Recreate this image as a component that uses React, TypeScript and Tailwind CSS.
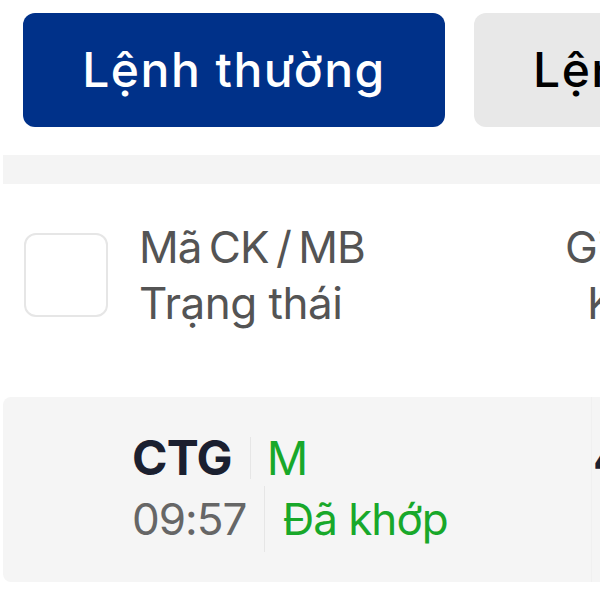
export default function App() {
  return (
    <div
      className="w-[600px] h-[600px] overflow-hidden bg-white"
      style={{ fontFamily: "Inter, 'Noto Sans', sans-serif" }}
    >
      {/* Order type tabs */}
      <div className="flex gap-[29px] pl-[23px] pt-[13px]">
        <button className="w-[422px] h-[114px] shrink-0 rounded-[12px] bg-[#003189] text-white text-[48px] font-medium tracking-[1.5px] whitespace-nowrap">
          Lệnh thường
        </button>
        <button className="w-[360px] h-[114px] shrink-0 rounded-[12px] bg-[#e8e8e8] text-black text-[48px] font-medium text-left pl-[59px] tracking-[1.5px] whitespace-nowrap">
          Lệnh điều kiện
        </button>
      </div>

      <div className="mt-[28px] ml-[3px] h-[29px] bg-[#f4f4f4]" />

      {/* Table header */}
      <div className="flex items-start pt-[49px] h-[213px]">
        <div className="ml-[24px] w-[84px] h-[84px] shrink-0 rounded-[12px] border-2 border-[#e6e6e6] bg-white" />
        <div className="ml-[31px] w-[426px] shrink-0 text-[44px] leading-[56px] text-[#545454] tracking-[-0.5px] -mt-[14px]">
          <div className="tracking-[-1px] [word-spacing:-4px]">Mã CK / MB</div>
          <div>Trạng thái</div>
        </div>
        <div className="text-[44px] leading-[56px] text-[#545454] whitespace-nowrap tracking-[-0.5px] -mt-[14px]">
          <div>Giá đặt</div>
          <div className="pl-[22px]">KL đặt</div>
        </div>
      </div>

      {/* Order row */}
      <div className="flex ml-[3px] h-[185px] rounded-l-[8px] bg-[#f5f5f5]">
        <div className="pl-[129px] pt-[33px] w-[589px] shrink-0 border-r border-[#f0f0f0]">
          <div className="flex items-center h-[56px]">
            <span className="text-[48px] font-bold text-[#1b2030] tracking-[-0.8px]">CTG</span>
            <span className="ml-[18px] w-px h-[42px] bg-[#e6e6e6]" />
            <span className="ml-[16px] text-[46px] text-[#18a82a]">M</span>
          </div>
          <div className="flex items-center h-[66px]">
            <span className="text-[44px] text-[#666666] tracking-[-1px]">09:57</span>
            <span className="ml-[18px] w-px h-[66px] bg-[#e6e6e6]" />
            <span className="ml-[17px] text-[44px] text-[#18a82a] tracking-[-1px]">Đã khớp</span>
          </div>
        </div>
        <div className="pl-[1px] pt-[33px] text-[48px] font-bold text-[#1b2030] whitespace-nowrap leading-[56px]">
          41.500
        </div>
      </div>
    </div>
  );
}
